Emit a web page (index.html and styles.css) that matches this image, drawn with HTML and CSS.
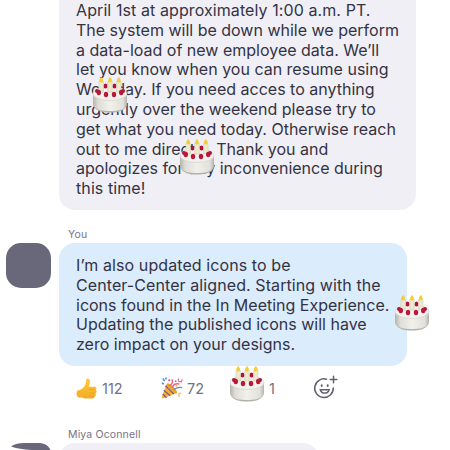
FILE: index.html
```html
<!DOCTYPE html>
<html lang="en">
<head>
<meta charset="utf-8">
<title>Chat</title>
<link rel="stylesheet" href="styles.css">
</head>
<body>
<svg class="defs" width="0" height="0" aria-hidden="true">
  <defs>
    <linearGradient id="side" x1="0" x2="1" y1="0" y2="0">
      <stop offset="0" stop-color="#b5b3a9"/><stop offset=".15" stop-color="#deddd6"/>
      <stop offset=".5" stop-color="#f1f0eb"/><stop offset=".88" stop-color="#e2e0da"/><stop offset="1" stop-color="#b3b1a9"/>
    </linearGradient>
    <linearGradient id="thumb" x1="0" x2="0" y1="0" y2="1">
      <stop offset="0" stop-color="#ffc936"/><stop offset="1" stop-color="#f5ac27"/>
    </linearGradient>
    <symbol id="cake" viewBox="0 0 36 37">
      <path d="M1 17v10c0 5 7 8 17 8s17-3 17-8V17z" fill="url(#side)"/>
      <path d="M2 29c2 4 8 5 16 5s14-1 16-5c-2 5-8 6.5-16 6.5S4 34 2 29z" fill="#b3b1a8"/>
      <ellipse cx="18" cy="16.5" rx="17" ry="7" fill="#f3f1ec" stroke="#cfcdc6" stroke-width=".6"/>
      <g fill="#ad1438"><ellipse cx="13.5" cy="9" rx="2" ry="2.6"/><ellipse cx="22.5" cy="9" rx="2" ry="2.6"/><ellipse cx="5" cy="14" rx="2" ry="2"/><ellipse cx="31" cy="14" rx="2" ry="2"/></g>
      <g fill="#eee9ce" stroke="#c9c4ac" stroke-width=".5"><path d="M7 4.5h4.4V15H7zM15.8 4.5h4.4V15h-4.4zM24.6 4.5H29V15h-4.4z"/></g>
      <g fill="#f3ce35"><path d="M9.2 0c3 3 2 5.5 0 5.5s-3-2.5 0-5.5zM18 0c3 3 2 5.5 0 5.5s-3-2.5 0-5.5zM26.8 0c3 3 2 5.5 0 5.5s-3-2.5 0-5.5z"/></g>
      <g fill="#b9183c"><ellipse cx="6.8" cy="15.5" rx="2.2" ry="2.7"/><ellipse cx="14" cy="17.5" rx="2.2" ry="2.7"/><ellipse cx="22" cy="17.5" rx="2.2" ry="2.7"/><ellipse cx="29.2" cy="15.5" rx="2.2" ry="2.7"/></g>
    </symbol>
  </defs>
</svg>
<main class="chat">
  <section class="message first">
    <div class="bubble grey">
      <p class="text">
        <span class="wide">April 1st at approximately 1:00 a.m. PT.</span>
        <span>The system will be down while we perform</span>
        <span>a data-load of new employee data. We’ll</span>
        <span>let you know when you can resume using</span>
        <span>Workday. If you need acces to anything</span>
        <span>urgently over the weekend please try to</span>
        <span>get what you need today. Otherwise reach</span>
        <span>out to me directly. Thank you and</span>
        <span>apologizes for any inconvenience during</span>
        <span class="wide">this time!</span>
      </p>
      <svg class="cake one"><use href="#cake"/></svg>
      <svg class="cake two"><use href="#cake"/></svg>
    </div>
  </section>
  <section class="message">
    <div class="name">You</div>
    <div class="row">
      <div class="avatar"></div>
      <div class="bubble blue">
        <p class="text">
          <span class="wide">I’m also updated icons to be</span>
          <span class="wide">Center-Center aligned. Starting with the</span>
          <span>icons found in the In Meeting Experience.</span>
          <span>Updating the published icons will have</span>
          <span>zero impact on your designs.</span>
        </p>
        <svg class="cake three"><use href="#cake"/></svg>
      </div>
    </div>
    <div class="reactions">
      <div class="reaction like">
        <svg viewBox="0 0 24 24"><path d="M1 15c2-2 5-1 7-4 2-2 3-4 3-8 0-2 3-3 4 0 1 3-1 5-1 7h6c3 0 3 3 1 3 2 1 2 4 0 4 1 1 1 4-1 4 0 2-1 2-3 2h-6c-3 0-4-2-7-1-3 0-4-4-3-7z" fill="url(#thumb)"/><path d="M14 13h7m-7 4h7m-7 3.500h6" fill="none" stroke="#e39a26" stroke-width=".7"/></svg>
        <span>112</span>
      </div>
      <div class="reaction party">
        <svg viewBox="0 0 24 24"><path d="m6 7 11 10L2 23q-2 0-1-2z" fill="#f3b52f"/><path d="m5 9 9 9M3 14l7 6M2 18l4 4" fill="none" stroke="#87559b" stroke-width="1.5"/><ellipse cx="12" cy="12" rx="2.500" ry="7.5" transform="rotate(-45 12 12)" fill="#e8a52b"/><path d="M9 9q5-3 3-7M12 11q2-5 8-4" fill="none" stroke="#ed6582" stroke-width="1.6"/><path d="M14 13q5-3 9-2" fill="none" stroke="#558dde" stroke-width="1.5"/><path d="M19 1v3l3 1 1-3" fill="none" stroke="#ed6582" stroke-width="1.3"/><path d="m2 1 2 3m2-4-1 2m-4 4 2 1" stroke="#568be5" stroke-width="1.8"/><path d="M20 21q-2-4 2-4" fill="none" stroke="#ffb078" stroke-width="1.5"/><circle cx="9" cy="3" r="1.2" fill="#e84b6b"/><circle cx="16" cy="4" r="1" fill="#a868c5"/><circle cx="17" cy="9" r="1" fill="#f0c03c"/></svg>
        <span>72</span>
      </div>
      <div class="reaction love"><i class="heart"></i><span>1</span><svg class="cake four"><use href="#cake"/></svg></div>
      <svg class="add" viewBox="0 0 26 26" fill="none" stroke="#626074" stroke-width="1.5" stroke-linecap="round"><path d="M13.500 4.200A9.300 9.300 0 1 0 20.300 13M20.500 1.200v6.500m-3.200-3.200h6.500M7.300 14.700q1 3.400 4.400 3.400t4.400-3.400z"/><path d="M8.700 10.300v.8m6-.8v.8" stroke-width="1.900"/></svg>
    </div>
  </section>
  <section class="message last">
    <div class="name">Miya Oconnell</div>
    <div class="row">
      <svg class="photo" viewBox="0 0 45 45"><path d="M5 3.2C9 .7 13 0 18 0h14c7 0 11 3 13 8-5-.5-9-1-15-1C20 7 11 5.7 5 3.2z" fill="#69687a"/></svg>
      <div class="bubble grey short"></div>
    </div>
  </section>
</main>
</body>
</html>
```
FILE: styles.css
```css
* { box-sizing: border-box; }
body {
  margin: 0;
  background: #fff;
  color: #343343;
  font-family: Inter, "Liberation Sans", sans-serif;
}
.defs { position: absolute; }
.chat { width: 450px; height: 450px; overflow: hidden; }
.bubble { position: relative; border-radius: 16px; }
.grey { background: #f0eff5; }
.blue { background: #dbecfd; width: 348px; height: 123px; padding: 13px 0 0 17px; }
.first .bubble {
  width: 357px;
  height: 210px;
  margin-left: 59px;
  padding: 1px 0 0 17px;
  border-radius: 0 0 16px 16px;
}
.text { margin: 0; font-size: 16px; line-height: 19.8px; letter-spacing: 0; white-space: nowrap; }
.text span { display: block; }
.text .wide { letter-spacing: 0.09px; }
.name {
  height: 33px;
  padding: 18px 0 0 68px;
  font-size: 10.5px;
  line-height: 13px;
  letter-spacing: 0.15px;
  color: #777587;
}
.row { display: flex; padding-left: 6px; gap: 8px; }
.avatar { width: 45px; height: 45px; border-radius: 15px; background: #69687a; }
.cake { position: absolute; width: 36px; height: 37px; }
.one { left: 33px; top: 77px; }
.two { left: 120px; top: 139px; }
.three { left: 335px; top: 52px; }
.four { left: -4px; top: -10px; }
.reactions {
  display: flex;
  height: 44px;
  padding: 10px 0 0 76px;
  color: #737181;
  font-size: 14.5px;
}
.reaction { position: relative; display: flex; align-items: center; height: 25px; gap: 4px; }
.reaction > svg:not(.cake) { width: 22px; height: 23px; }
.like { width: 85px; }
.party { width: 72px; }
.love { width: 80px; gap: 5px; }
.heart { width: 31px; height: 10px; border-radius: 5px; background: #ed6558; }
.add { width: 26px; height: 26px; margin-top: -1px; }
.last .name { height: 33px; padding-top: 18px; }
.short { width: 260px; height: 45px; }
.photo { width: 45px; height: 45px; }
```
